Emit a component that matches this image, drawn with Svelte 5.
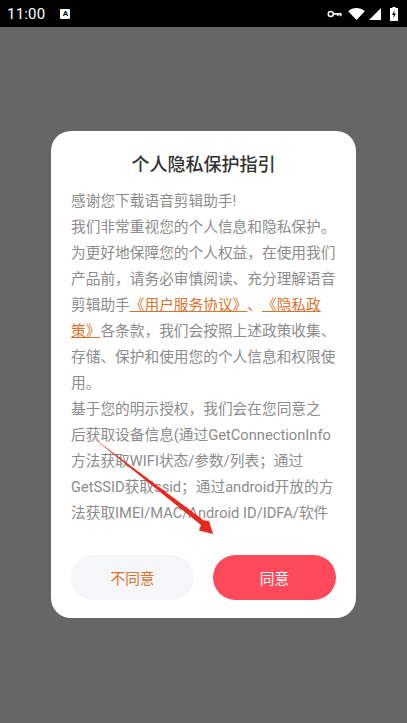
<script lang="ts">
  const before = [
    '感谢您下载语音剪辑助手!',
    '我们非常重视您的个人信息和隐私保护。',
    '为更好地保障您的个人权益，在使用我们',
    '产品前，请务必审慎阅读、充分理解语音'
  ];
  const after = [
    '存储、保护和使用您的个人信息和权限使',
    '用。',
    '基于您的明示授权，我们会在您同意之',
    '后获取设备信息(通过GetConnectionInfo',
    '方法获取WIFI状态/参数/列表；通过',
    'GetSSID获取ssid；通过android开放的方',
    '法获取IMEI/MAC/Android ID/IDFA/软件'
  ];
</script>

<div class="screen">
  <header class="status">
    <span class="time">11:00</span>
    <span class="note">A</span>
    <span class="status-icons">
      <svg class="key" viewBox="0 0 16 8" aria-hidden="true">
        <circle cx="4" cy="4" r="2.7" fill="none" stroke="#fff" stroke-width="1.5" />
        <path d="M6.7 2.8H15.5V6.4H13.6V4.9H12.2V6.2H10.6V4.9H6.7Z" fill="#fff" />
      </svg>
      <svg class="wifi" viewBox="0 0 18 13" aria-hidden="true">
        <path d="M0 3.4C5-1.1 13-1.1 18 3.4L9 13Z" fill="#fff" />
      </svg>
      <svg class="signal" viewBox="0 0 12 12" aria-hidden="true">
        <path d="M12 0V12H0Z" fill="#fff" />
      </svg>
      <svg class="battery" viewBox="0 0 8 14" aria-hidden="true">
        <path d="M2.5 0H5.5V1H8V14H0V1H2.5Z" fill="#fff" />
        <path d="M4.6 3L2.2 8H3.8L3.4 11.4L5.8 6.4H4.2Z" fill="#000" />
      </svg>
    </span>
  </header>

  <main class="overlay">
    <section class="dialog">
      <h1>个人隐私保护指引</h1>
      <div class="body">
        {#each before as line}
          <p>{line}</p>
        {/each}
        <p>剪辑助手<a href="#terms">《用户服务协议》</a><span class="orange">、</span><a href="#privacy">《隐私政</a></p>
        <p><a href="#privacy">策》</a>各条款，我们会按照上述政策收集、</p>
        {#each after as line}
          <p>{line}</p>
        {/each}
      </div>
      <div class="actions">
        <button class="decline">不同意</button>
        <button class="accept">同意</button>
      </div>
      <svg class="arrow" viewBox="0 0 122 98" aria-hidden="true">
        <path d="M0 0L112 83.5L117 84L121 97L107 93.5L109 88Z" fill="#e8281e" />
      </svg>
    </section>
  </main>
</div>

<style>
  :global(body) {
    margin: 0;
    background: #666;
  }

  .screen {
    width: 407px;
    height: 723px;
    display: flex;
    flex-direction: column;
    overflow: hidden;
    font-family: Roboto, "Noto Sans CJK SC", sans-serif;
  }

  .status {
    height: 27px;
    flex: none;
    background: #000;
    color: #fff;
    display: flex;
    align-items: center;
    padding: 0 9px 0 7px;
  }

  .time {
    font-size: 15px;
    letter-spacing: 0.2px;
  }

  .note {
    width: 10px;
    height: 10px;
    margin-left: 15px;
    border-radius: 1px;
    background: #fff;
    color: #000;
    font-size: 8px;
    font-weight: 700;
    line-height: 10px;
    text-align: center;
  }

  .status-icons {
    margin-left: auto;
    display: flex;
    align-items: center;
  }

  .key {
    width: 15px;
    height: 8px;
  }

  .wifi {
    width: 17px;
    height: 12px;
    margin-left: 6px;
  }

  .signal {
    width: 12px;
    height: 12px;
    margin-left: 4px;
  }

  .battery {
    width: 8px;
    height: 14px;
    margin-left: 9px;
  }

  .overlay {
    flex: 1;
    background: #666;
    display: flex;
    justify-content: center;
    padding-top: 104px;
  }

  .dialog {
    position: relative;
    width: 305px;
    height: 487px;
    box-sizing: border-box;
    padding: 0 20px;
    background: #fff;
    border-radius: 20px;
    display: flex;
    flex-direction: column;
  }

  h1 {
    margin: 0;
    padding-top: 21px;
    color: #333;
    font-size: 18px;
    font-weight: 500;
    line-height: 26px;
    text-align: center;
  }

  .body {
    margin-top: 10px;
    color: #8c8c8c;
    font-size: 14.7px;
    line-height: 26px;
    text-spacing-trim: space-all;
  }

  .body p {
    margin: 0;
    white-space: nowrap;
  }

  .body a {
    color: #d9742f;
  }

  .orange {
    color: #d9742f;
  }

  .actions {
    margin-top: auto;
    padding-bottom: 18px;
    display: flex;
    justify-content: space-between;
  }

  button {
    width: 123px;
    height: 45px;
    border: 0;
    border-radius: 23px;
    font: inherit;
    font-size: 14.7px;
  }

  .decline {
    background: #f5f6f7;
    color: #d9742f;
  }

  .accept {
    background: #ff4a5c;
    color: #fff;
  }

  .arrow {
    position: absolute;
    left: 41px;
    top: 306px;
    width: 122px;
    height: 98px;
  }
</style>
